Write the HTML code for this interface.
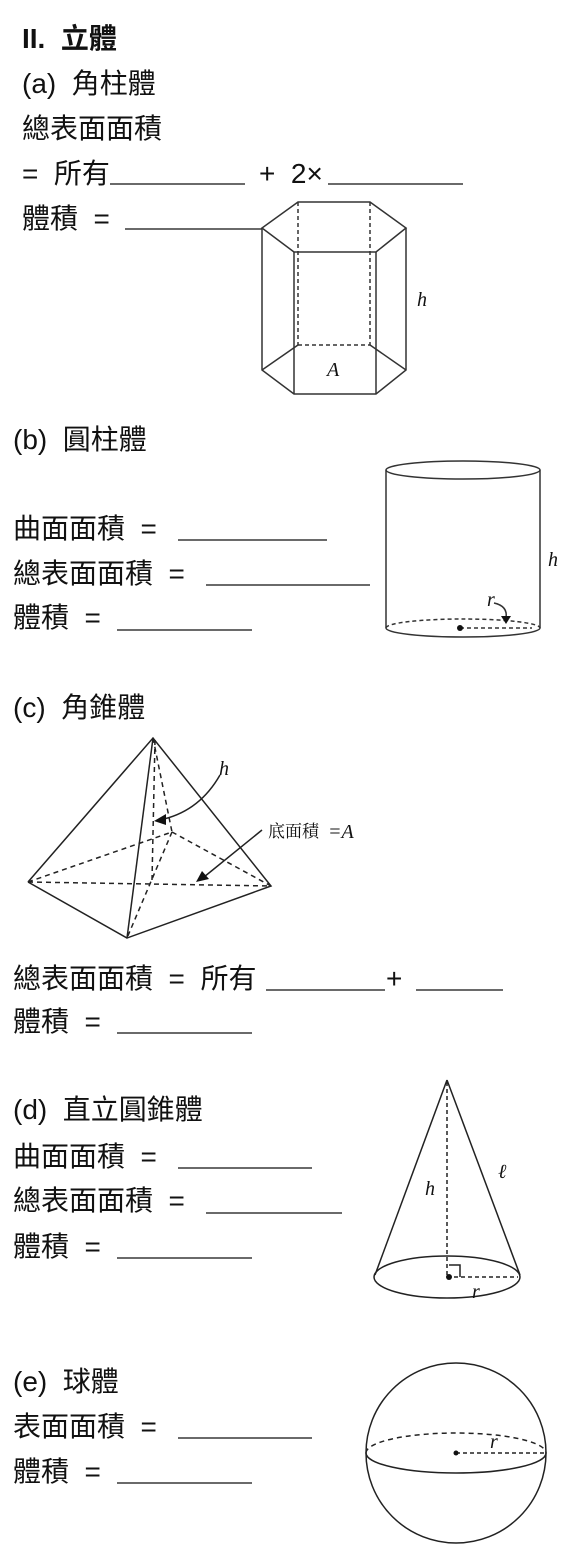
<!DOCTYPE html>
<html><head><meta charset="utf-8"><style>
body{margin:0;background:#fff;}
svg{display:block}
text{font-family:"Liberation Sans","Noto Sans CJK TC",sans-serif;font-size:28px;fill:#111;white-space:pre;}
.i{font-family:"Liberation Serif",serif;font-style:italic;font-size:20px;}
.s{font-family:"Noto Serif CJK SC","Liberation Serif",serif;font-size:17px;}
</style></head><body>
<svg width="576" height="1562" viewBox="0 0 576 1562" xmlns="http://www.w3.org/2000/svg" xml:space="preserve">
<g stroke="#111" stroke-width="1.3" fill="none">
<line x1="110" y1="184" x2="245" y2="184"/><line x1="328" y1="184" x2="463" y2="184"/>
<line x1="125" y1="229" x2="262" y2="229"/>
<line x1="178" y1="540" x2="327" y2="540"/><line x1="206" y1="585" x2="370" y2="585"/><line x1="117" y1="630" x2="252" y2="630"/>
<line x1="266" y1="990" x2="385" y2="990"/><line x1="416" y1="990" x2="503" y2="990"/><line x1="117" y1="1033" x2="252" y2="1033"/>
<line x1="178" y1="1168" x2="312" y2="1168"/><line x1="206" y1="1213" x2="342" y2="1213"/><line x1="117" y1="1258" x2="252" y2="1258"/>
<line x1="178" y1="1438" x2="312" y2="1438"/><line x1="117" y1="1483" x2="252" y2="1483"/>
</g>
<g stroke="#333" stroke-width="1.5" fill="none">
<polygon points="298,202 370,202 406,228 376,252 294,252 262,228"/>
<polyline points="262,228 262,370 294,394 376,394 406,370 406,228"/>
<line x1="294" y1="252" x2="294" y2="394"/><line x1="376" y1="252" x2="376" y2="394"/>
<line x1="262" y1="370" x2="298" y2="345"/><line x1="406" y1="370" x2="370" y2="345"/>
<g stroke-dasharray="4,3"><line x1="298" y1="202" x2="298" y2="345"/><line x1="370" y1="202" x2="370" y2="345"/><line x1="298" y1="345" x2="370" y2="345"/></g>
</g>
<text class="i" x="327" y="376" font-size="22">A</text>
<text class="i" x="417" y="306">h</text>
<g stroke="#333" stroke-width="1.5" fill="none">
<ellipse cx="463" cy="470" rx="77" ry="9"/>
<line x1="386" y1="470" x2="386" y2="628"/><line x1="540" y1="470" x2="540" y2="628"/>
<path d="M386 628 A77 9 0 0 0 540 628"/>
<path d="M386 628 A77 9 0 0 1 540 628" stroke-dasharray="4,3"/>
<line x1="460" y1="628" x2="532" y2="628" stroke-dasharray="4,3"/>
<path d="M494 603 Q508 606 506 618"/>
</g>
<polygon points="501,616 511,616 506,624" fill="#111"/>
<circle cx="460" cy="628" r="3" fill="#111"/>
<text class="i" x="487" y="606" font-size="16">r</text>
<text class="i" x="548" y="566">h</text>
<g stroke="#222" stroke-width="1.5" fill="none">
<polyline points="28,882 153,738 271,886 127,938 28,882"/>
<line x1="153" y1="738" x2="127" y2="938"/>
<g stroke-dasharray="5,4">
<line x1="28" y1="882" x2="271" y2="886"/><line x1="28" y1="882" x2="172" y2="832"/><line x1="172" y1="832" x2="271" y2="886"/>
<line x1="153" y1="738" x2="172" y2="832"/><line x1="172" y1="832" x2="127" y2="938"/><line x1="155" y1="740" x2="152" y2="880"/>
</g>
<path d="M220 775 Q200 810 164 819"/>
<line x1="262" y1="830" x2="204" y2="877"/>
</g>
<polygon points="154,821 166,814 166,825" fill="#111"/>
<polygon points="196,882 202,871 209,879" fill="#111"/>
<text class="i" x="219" y="775" font-size="17">h</text>
<text class="s" x="268" y="837">底面積</text>
<text class="i" x="328" y="838" font-size="18">=A</text>
<g stroke="#222" stroke-width="1.5" fill="none">
<line x1="447" y1="1080" x2="375" y2="1275"/><line x1="447" y1="1080" x2="520" y2="1275"/>
<ellipse cx="447" cy="1277" rx="73" ry="21"/>
<line x1="447" y1="1082" x2="447" y2="1277" stroke-dasharray="4,3"/>
<line x1="447" y1="1277" x2="518" y2="1277" stroke-dasharray="4,3"/>
<polyline points="449,1265 460,1265 460,1277"/>
</g>
<circle cx="449" cy="1277" r="3" fill="#111"/>
<text class="i" x="425" y="1195">h</text>
<text class="i" x="498" y="1178">ℓ</text>
<text class="i" x="472" y="1298" font-size="17">r</text>
<g stroke="#222" stroke-width="1.5" fill="none">
<circle cx="456" cy="1453" r="90"/>
<path d="M366 1453 A90 20 0 0 0 546 1453"/>
<path d="M366 1453 A90 20 0 0 1 546 1453" stroke-dasharray="5,4"/>
<line x1="456" y1="1453" x2="544" y2="1453" stroke-dasharray="4,3"/>
</g>
<circle cx="456" cy="1453" r="2.5" fill="#111"/>
<text class="i" x="490" y="1448" font-size="16">r</text>
<text x="22" y="48" font-weight="bold">II.  立體</text>
<text x="22" y="93">(a)  角柱體</text>
<text x="22" y="138">總表面面積</text>
<text x="22" y="183">=  所有</text>
<text x="259" y="183">+  2×</text>
<text x="22" y="228">體積  =</text>
<text x="13" y="449">(b)  圓柱體</text>
<text x="13" y="538">曲面面積  =</text>
<text x="13" y="583">總表面面積  =</text>
<text x="13" y="627">體積  =</text>
<text x="13" y="717">(c)  角錐體</text>
<text x="13" y="988">總表面面積  =  所有</text>
<text x="386" y="988">+</text>
<text x="13" y="1031">體積  =</text>
<text x="13" y="1119">(d)  直立圓錐體</text>
<text x="13" y="1166">曲面面積  =</text>
<text x="13" y="1210">總表面面積  =</text>
<text x="13" y="1256">體積  =</text>
<text x="13" y="1391">(e)  球體</text>
<text x="13" y="1436">表面面積  =</text>
<text x="13" y="1481">體積  =</text>
</svg>
</body></html>
